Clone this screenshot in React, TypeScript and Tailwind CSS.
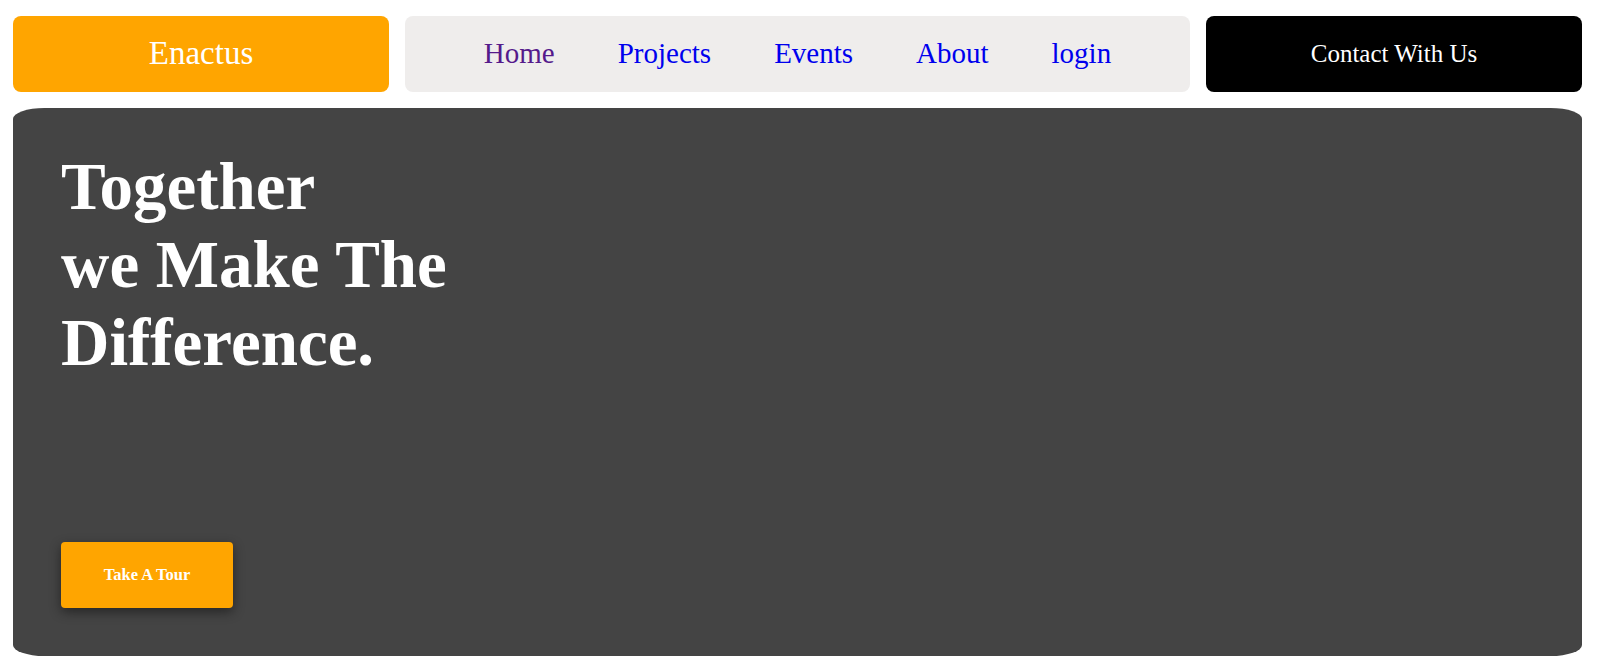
const navLinks = [
  { label: 'Home', visited: true },
  { label: 'Projects', visited: false },
  { label: 'Events', visited: false },
  { label: 'About', visited: false },
  { label: 'login', visited: false },
];

function Header() {
  return (
    <header className="grid grid-cols-[376px_1fr_376px] gap-4 h-[76px]">
      {/* Brand */}
      <div className="bg-[#ffa500] rounded-[8px] flex items-center justify-center">
        <span className="text-white text-[33px]">Enactus</span>
      </div>

      {/* Links */}
      <nav className="bg-[#efedec] rounded-[8px] flex items-center justify-center gap-[63px]">
        {navLinks.map((link) => (
          <a
            key={link.label}
            href="#"
            className={`text-[29px] ${link.visited ? 'text-[#551a8b]' : 'text-[#0000ee]'}`}
          >
            {link.label}
          </a>
        ))}
      </nav>

      {/* Contact */}
      <div className="bg-black rounded-[8px] flex items-center justify-center">
        <span className="text-white text-[25px]">Contact With Us</span>
      </div>
    </header>
  );
}

function Hero() {
  return (
    <section className="bg-[#444444] rounded-[2%] h-[548px] pl-12 pt-[39px] pb-12 flex flex-col justify-between">
      <h1 className="text-white font-bold text-[67px] leading-[78px]">
        Together
        <br />
        we Make The
        <br />
        Difference.
      </h1>
      <button className="w-[172px] h-[66px] bg-[#ffa500] rounded-[4px] text-white font-bold text-[16.5px] shadow-[0_4px_12px_rgba(0,0,0,0.45)]">
        Take A Tour
      </button>
    </section>
  );
}

export default function App() {
  return (
    <div className="min-h-[671px] bg-white pl-[13px] pr-[18px] pt-4 flex flex-col gap-4 font-['Liberation_Serif','Times_New_Roman',serif]">
      <Header />
      <Hero />
    </div>
  );
}
